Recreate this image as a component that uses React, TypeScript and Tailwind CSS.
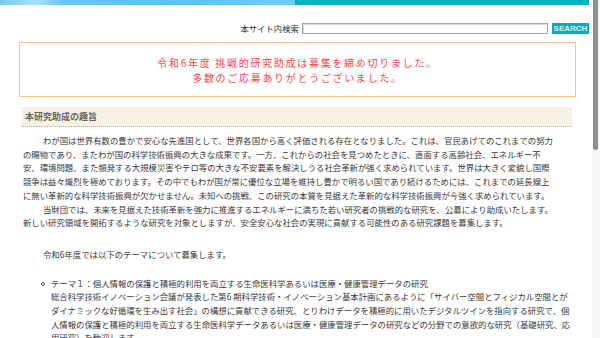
import React from 'react';

const jp = "font-['Noto_Sans_CJK_JP','Noto_Sans',sans-serif]";

const intro = [
  'わが国は世界有数の豊かで安心な先進国として、世界各国から高く評価される存在となりました。これは、官民あげてのこれまでの努力',
  'の賜物であり、またわが国の科学技術振興の大きな成果です。一方、これからの社会を見つめたときに、直面する高齢社会、エネルギー不',
  '安、環境問題、また頻発する大規模災害やテロ等の大きな不安要素を解決しうる社会革新が強く求められています。世界は大きく変貌し国際',
  '競争は益々熾烈を極めております。その中でもわが国が常に優位な立場を維持し豊かで明るい国であり続けるためには、これまでの延長線上',
  'に無い革新的な科学技術振興が欠かせません。未知への挑戦、この研究の本質を見据えた革新的な科学技術振興が今強く求められています。',
];

const foundation = [
  '当財団では、未来を見据えた技術革新を強力に推進するエネルギーに満ちた若い研究者の挑戦的な研究を、公募により助成いたします。',
  '新しい研究領域を開拓するような研究を対象としますが、安全安心な社会の実現に貢献する可能性のある研究課題を募集します。',
];

const theme1 = [
  'テーマ１：個人情報の保護と積極的利用を両立する生命医科学あるいは医療・健康管理データの研究',
  '総合科学技術イノベーション会議が発表した第6 期科学技術・イノベーション基本計画にあるように「サイバー空間とフィジカル空間とが',
  'ダイナミックな好循環を生み出す社会」の構想に貢献できる研究、とりわけデータを積極的に用いたデジタルツインを指向する研究で、個',
  '人情報の保護と積極的利用を両立する生命医科学データあるいは医療・健康管理データの研究などの分野での意欲的な研究（基礎研究、応',
  '用研究）を歓迎します。',
];

function Lines({ lines, indentFirst }: { lines: string[]; indentFirst?: boolean }) {
  return (
    <div>
      {lines.map((line, i) => (
        <div key={i} className={`whitespace-nowrap ${i === 0 && indentFirst ? 'pl-[20px]' : ''}`}>
          {line}
        </div>
      ))}
    </div>
  );
}

export default function App() {
  return (
    <div className={`flex h-[338px] w-[600px] overflow-hidden bg-white ${jp}`}>
      <main className="w-[592px] shrink-0">
        <div className="flex h-[5px] pr-[3px]">
          <div className="w-[295px] bg-[linear-gradient(90deg,#74ccf0_0%,#a6e1f8_12%,#62c8f1_22%,#55c4ef_60%,#6bd0f6_100%)]" />
          <div className="flex-1 bg-[#00b1c3]" />
        </div>

        <div className="mt-[18px] flex items-center justify-end gap-[3px] pr-[3px]">
          <span className="text-[8.4px] leading-[11px] text-[#333]">本サイト内検索</span>
          <div className="h-[11px] w-[246px] border border-[#a8a8a8] bg-white shadow-[inset_1px_1px_0_#d8d8d8]" />
          <button
            type="button"
            className="ml-[1px] h-[11px] w-[37px] bg-[#17a7b3] font-['Liberation_Sans',sans-serif] text-[8px] font-bold leading-[11px] text-[#d9f3f5]"
          >
            SEARCH
          </button>
        </div>

        <div className="ml-[19px] mt-[8px] flex h-[55px] w-[557px] flex-col items-center justify-center border border-[#ffc27e] text-[10px] leading-[15px] tracking-[1.7px] text-[#ff4747]">
          <p>令和6年度 挑戦的研究助成は募集を締め切りました。</p>
          <p>多数のご応募ありがとうございました。</p>
        </div>

        <div className="ml-[22px] mt-[10px] flex h-[20px] w-[550px] items-center border-b border-dotted border-[#b5b0a4] bg-[#f6f1e3] pl-[3px] text-[9px] font-bold text-[#666]">
          本研究助成の趣旨
        </div>

        <div className="ml-[23px] mt-[7px] text-[8.4px] leading-[13.7px] text-[#383838]">
          <Lines lines={intro} indentFirst />
          <Lines lines={foundation} indentFirst />
          <p className="mt-[18px] pl-[20px]">令和6年度では以下のテーマについて募集します。</p>
          <div className="mt-[15px] flex">
            <span className="ml-[18px] mt-[5px] h-[4px] w-[4px] shrink-0 rounded-full border border-[#555]" />
            <div className="ml-[6px]">
              <Lines lines={theme1} />
            </div>
          </div>
        </div>
      </main>

      <div className="w-[8px] shrink-0 bg-[#f7f7f7] pl-[1px]">
        <div className="h-[150px] w-[5px] rounded-b-[3px] bg-[#8f8f8f]" />
      </div>
    </div>
  );
}
